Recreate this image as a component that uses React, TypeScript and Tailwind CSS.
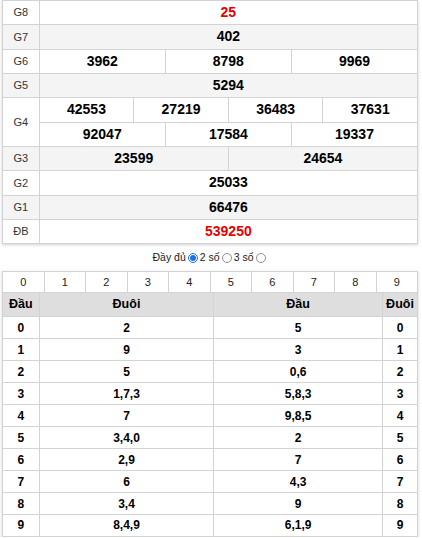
import React from "react";

const font = { fontFamily: '"Liberation Sans", Arial, sans-serif' };

type Prize = { label: string; rows: string[][]; red?: boolean; gray?: boolean };

const prizes: Prize[] = [
  { label: "G8", rows: [["25"]], red: true },
  { label: "G7", rows: [["402"]], gray: true },
  { label: "G6", rows: [["3962", "8798", "9969"]] },
  { label: "G5", rows: [["5294"]], gray: true },
  { label: "G4", rows: [["42553", "27219", "36483", "37631"], ["92047", "17584", "19337"]] },
  { label: "G3", rows: [["23599", "24654"]], gray: true },
  { label: "G2", rows: [["25033"]] },
  { label: "G1", rows: [["66476"]], gray: true },
  { label: "ĐB", rows: [["539250"]], red: true },
];

const loto: [number, string, string][] = [
  [0, "2", "5"],
  [1, "9", "3"],
  [2, "5", "0,6"],
  [3, "1,7,3", "5,8,3"],
  [4, "7", "9,8,5"],
  [5, "3,4,0", "2"],
  [6, "2,9", "7"],
  [7, "6", "4,3"],
  [8, "3,4", "9"],
  [9, "8,4,9", "6,1,9"],
];

function Radio({ checked }: { checked?: boolean }) {
  return checked ? (
    <span className="mx-[2px] inline-flex h-[10px] w-[10px] items-center justify-center rounded-full border border-[#1a73e8] bg-white">
      <span className="h-[6px] w-[6px] rounded-full bg-[#1a73e8]" />
    </span>
  ) : (
    <span className="mx-[2px] inline-block h-[10px] w-[10px] rounded-full border border-[#8f8f8f] bg-white" />
  );
}

export default function App() {
  return (
    <div className="w-[420px] bg-white px-[2px] text-black" style={font}>
      {/* Results table */}
      <div className="border-l border-t border-[#d3d3d3] shadow-[0_1px_3px_rgba(0,0,0,0.18)]">
        {prizes.map((p) => (
          <div key={p.label} className={`flex ${p.gray ? "bg-[#f4f4f4]" : "bg-white"}`}>
            <div className="flex w-[36.7px] shrink-0 items-center justify-center border-b border-r border-[#d3d3d3] text-[11px] text-[#333]">
              {p.label}
            </div>
            <div className="flex flex-1 flex-col">
              {p.rows.map((row, i) => (
                <div key={i} className="flex h-[24.33px]">
                  {row.map((n) => (
                    <div
                      key={n}
                      className={`flex flex-1 items-center justify-center border-b border-r border-[#d3d3d3] text-[14px] font-bold ${
                        p.red ? "text-[#e60000]" : "text-black"
                      }`}
                    >
                      {n}
                    </div>
                  ))}
                </div>
              ))}
            </div>
          </div>
        ))}
      </div>

      {/* Options */}
      <div className="flex h-[27px] items-center justify-center text-[10.5px] text-[#222]">
        <span>Đầy đủ</span>
        <Radio checked />
        <span>2 số</span>
        <Radio />
        <span>3 số</span>
        <Radio />
      </div>

      {/* Loto table */}
      <div className="border-l border-t border-[#d3d3d3] shadow-[0_1px_3px_rgba(0,0,0,0.18)]">
        <div className="flex h-[21px]">
          {Array.from({ length: 10 }, (_, i) => (
            <div
              key={i}
              className="flex flex-1 items-center justify-center border-b border-r border-[#d3d3d3] text-[11px] text-[#222]"
            >
              {i}
            </div>
          ))}
        </div>
        <div className="flex h-[24px] bg-[#dedede] text-[12.5px] font-bold">
          <div className="flex w-[36.7px] items-center justify-center border-b border-r border-[#d3d3d3]">Đầu</div>
          <div className="flex w-[174.6px] items-center justify-center border-b border-r border-[#d3d3d3]">Đuôi</div>
          <div className="flex flex-1 items-center justify-center border-b border-r border-[#d3d3d3]">Đầu</div>
          <div className="flex w-[35px] items-center justify-center border-b border-r border-[#d3d3d3]">Đuôi</div>
        </div>
        {loto.map(([d, tail, head]) => (
          <div key={d} className="flex h-[21.97px] text-[12px] font-bold">
            <div className="flex w-[36.7px] items-center justify-center border-b border-r border-[#d3d3d3]">{d}</div>
            <div className="flex w-[174.6px] items-center justify-center border-b border-r border-[#d3d3d3]">{tail}</div>
            <div className="flex flex-1 items-center justify-center border-b border-r border-[#d3d3d3]">{head}</div>
            <div className="flex w-[35px] items-center justify-center border-b border-r border-[#d3d3d3]">{d}</div>
          </div>
        ))}
      </div>
    </div>
  );
}
